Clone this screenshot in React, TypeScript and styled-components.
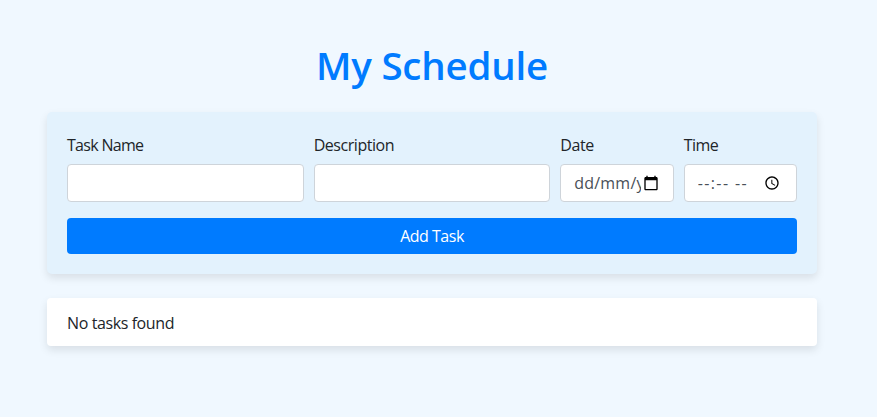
import React from 'react';
import styled, { createGlobalStyle } from 'styled-components';

const GlobalStyle = createGlobalStyle`
  *, *::before, *::after { box-sizing: border-box; }
  body {
    margin: 0;
    min-height: 100vh;
    background: #f0f8ff;
    color: #212529;
    font: 400 16px/24px "Open Sans", "Noto Sans", sans-serif;
  }
`;

const Page = styled.main`
  width: 770px;
  margin-left: 47px;
  padding: 41px 0 48px;
`;

const Title = styled.h1`
  margin: 0 0 23px;
  color: #007bff;
  font-size: 38.5px;
  font-weight: 600;
  line-height: 48px;
  text-align: center;
  letter-spacing: -0.2px;
`;

const FormCard = styled.form`
  padding: 20px;
  background: #e3f2fd;
  border-radius: 5px;
  box-shadow: 0 4px 8px rgba(0, 0, 0, 0.1);
`;

const FieldRow = styled.div`
  display: flex;
  margin: 0 -5px 16px;
`;

const Field = styled.div<{ $span: number }>`
  flex: 0 0 ${({ $span }) => ($span / 12) * 100}%;
  min-width: 0;
  padding: 0 5px;
`;

const Text = styled.span<{ $track: number }>`
  letter-spacing: ${({ $track }) => $track}px;
`;

const Label = styled.label`
  display: block;
  height: 24px;
  margin-bottom: 8px;
  line-height: 26px;
`;

const TextInput = styled.input`
  display: block;
  width: 100%;
  height: 38px;
  padding: 6px 12px;
  border: 1px solid #ced4da;
  border-radius: 4px;
  background: #fff;
  color: #495057;
  font: inherit;
  outline: none;
`;

const PickerBox = styled.div<{ $end: number }>`
  display: flex;
  align-items: center;
  height: 38px;
  padding: 0 ${({ $end }) => $end}px 0 13px;
  border: 1px solid #ced4da;
  border-radius: 4px;
  background: #fff;
  color: #495057;
`;

const PickerValue = styled.div`
  flex: 1;
  min-width: 0;
  overflow: hidden;
  white-space: nowrap;
  line-height: 26px;
`;

const PickerIcon = styled.svg`
  flex: none;
  width: 16px;
  height: 16px;
  margin-left: 2px;
`;

const SubmitButton = styled.button`
  display: block;
  width: 100%;
  height: 36px;
  padding: 0;
  border: 0;
  border-radius: 4px;
  background: #007bff;
  color: #fff;
  font: inherit;
`;

const TaskList = styled.ul`
  margin: 24px 0 0;
  padding: 0;
  list-style: none;
`;

const TaskItem = styled.li`
  height: 48px;
  padding: 12px 20px;
  border-radius: 4px;
  background: #fff;
  line-height: 26px;
  box-shadow: 0 4px 8px rgba(0, 0, 0, 0.1);
`;

const CalendarIcon = () => (
  <PickerIcon viewBox="0 0 24 24" aria-hidden="true">
    <path d="M20 3h-1V1h-2v2H7V1H5v2H4c-1.1 0-2 .9-2 2v16c0 1.1.9 2 2 2h16c1.1 0 2-.9 2-2V5c0-1.1-.9-2-2-2zm0 18H4V8h16v13z" />
  </PickerIcon>
);

const ClockIcon = () => (
  <PickerIcon viewBox="0 0 24 24" aria-hidden="true">
    <path d="M11.99 2C6.47 2 2 6.48 2 12s4.47 10 9.99 10C17.52 22 22 17.52 22 12S17.52 2 11.99 2zM12 20c-4.42 0-8-3.58-8-8s3.58-8 8-8 8 3.58 8 8-3.58 8-8 8z" />
    <path d="M12.5 7H11v6l5.25 3.15.75-1.23-4.5-2.67z" />
  </PickerIcon>
);

export default function App() {
  return (
    <>
      <GlobalStyle />
      <Page>
        <Title>My Schedule</Title>
        <FormCard onSubmit={(e) => e.preventDefault()}>
          <FieldRow>
            <Field $span={4}>
              <Label htmlFor="name"><Text $track={-0.7}>Task Name</Text></Label>
              <TextInput id="name" />
            </Field>
            <Field $span={4}>
              <Label htmlFor="description"><Text $track={-0.45}>Description</Text></Label>
              <TextInput id="description" />
            </Field>
            <Field $span={2}>
              <Label><Text $track={-0.4}>Date</Text></Label>
              <PickerBox $end={14}>
                <PickerValue><Text $track={0.2}>dd/mm/yyyy</Text></PickerValue>
                <CalendarIcon />
              </PickerBox>
            </Field>
            <Field $span={2}>
              <Label><Text $track={-0.5}>Time</Text></Label>
              <PickerBox $end={16}>
                <PickerValue><Text $track={1.4}>--:-- --</Text></PickerValue>
                <ClockIcon />
              </PickerBox>
            </Field>
          </FieldRow>
          <SubmitButton type="submit"><Text $track={-0.5}>Add Task</Text></SubmitButton>
        </FormCard>
        <TaskList>
          <TaskItem><Text $track={-0.4}>No tasks found</Text></TaskItem>
        </TaskList>
      </Page>
    </>
  );
}
